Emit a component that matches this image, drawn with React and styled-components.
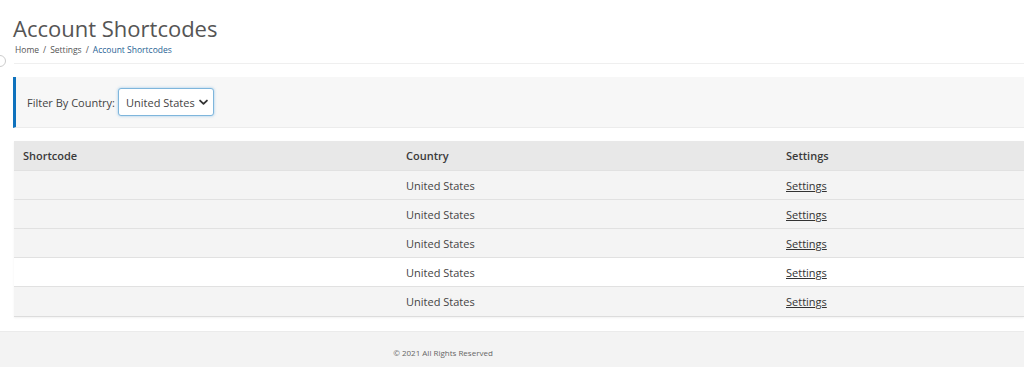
import React from 'react'
import styled, { createGlobalStyle } from 'styled-components'

const GlobalStyle = createGlobalStyle`
  html, body {
    margin: 0;
    padding: 0;
    background: #fff;
    font-family: 'Open Sans', 'Liberation Sans', sans-serif;
    color: #444;
    overflow: hidden;
  }
`

const Page = styled.div`
  width: 1024px;
  height: 367px;
  display: flex;
  flex-direction: column;
  position: relative;
  overflow: hidden;
`

const Header = styled.header`
  padding: 13px 0 0 13px;
`

const Title = styled.h1`
  margin: 0;
  font-size: 22px;
  font-weight: 400;
  line-height: 30px;
  color: #555;
`

const Crumbs = styled.div`
  display: flex;
  gap: 4px;
  margin: 1px 0 0 2px;
  font-size: 8.5px;
  line-height: 12px;
  color: #555;
`

const Crumb = styled.span`
  color: ${p => (p.active ? '#1f5f94' : '#555')};
`

const Divider = styled.div`
  margin: 7px 0 0 14px;
  height: 1px;
  background: #efefef;
`

const EdgeDot = styled.div`
  position: absolute;
  left: -6px;
  top: 55px;
  width: 10px;
  height: 10px;
  border: 1px solid #ccc;
  border-radius: 50%;
  background: #fff;
`

const FilterBar = styled.section`
  margin: 13px 0 0 13px;
  height: 50px;
  display: flex;
  align-items: center;
  gap: 3px;
  padding-left: 11px;
  background: #f7f7f7;
  border-left: 3px solid #0f72bd;
  border-bottom: 1px solid #ececec;
  font-size: 11px;
  color: #444;
`

const SelectBox = styled.div`
  width: 96px;
  height: 28px;
  box-sizing: border-box;
  display: flex;
  align-items: center;
  justify-content: space-between;
  padding: 0 5px 0 7px;
  background: #fff;
  border: 1px solid #7fb6dc;
  border-radius: 3px;
  box-shadow: 0 0 3px rgba(80, 160, 220, 0.55);
  font-size: 11px;
  color: #444;
`

const Table = styled.div`
  margin: 13px 0 0 14px;
  border-bottom: 1px solid #dcdcdc;
  box-shadow: 0 1px 2px rgba(0, 0, 0, 0.06);
`

const Row = styled.div`
  box-sizing: border-box;
  display: grid;
  grid-template-columns: 383px 380px 1fr;
  height: ${p => (p.head ? 30 : 29)}px;
  align-items: center;
  background: ${p => (p.head ? '#e8e8e8' : p.hover ? '#fff' : '#f4f4f4')};
  border-bottom: 1px solid ${p => (p.last ? 'transparent' : '#e1e1e1')};
  font-size: 11px;
  font-weight: ${p => (p.head ? 600 : 400)};
  color: ${p => (p.head ? '#3a3a3a' : '#444')};
`

const Cell = styled.div`
  padding-left: 9px;
  white-space: nowrap;
`

const Link = styled.a`
  color: #333;
  text-decoration: underline;
  cursor: pointer;
`

const Footer = styled.footer`
  box-sizing: border-box;
  margin-top: auto;
  height: 36px;
  background: #f3f3f3;
  border-top: 1px solid #ebebeb;
  display: flex;
  align-items: center;
  justify-content: center;
  padding: 5px 138px 0 0;
  font-size: 8px;
  color: #666;
`

const Chevron = () => (
  <svg width="9" height="7" viewBox="0 0 10 7">
    <path d="M1.2 1.3 L5 5 L8.8 1.3" fill="none" stroke="#333" strokeWidth="2" strokeLinecap="round" strokeLinejoin="round" />
  </svg>
)

const rows = [false, false, false, true, false]

export default function App() {
  return (
    <Page>
      <GlobalStyle />
      <EdgeDot />
      <Header>
        <Title>Account Shortcodes</Title>
        <Crumbs>
          <Crumb>Home</Crumb>
          <Crumb>/</Crumb>
          <Crumb>Settings</Crumb>
          <Crumb>/</Crumb>
          <Crumb active>Account Shortcodes</Crumb>
        </Crumbs>
      </Header>
      <Divider />
      <FilterBar>
        <span>Filter By Country:</span>
        <SelectBox>
          <span>United States</span>
          <Chevron />
        </SelectBox>
      </FilterBar>
      <Table>
        <Row head>
          <Cell>Shortcode</Cell>
          <Cell>Country</Cell>
          <Cell>Settings</Cell>
        </Row>
        {rows.map((hover, i) => (
          <Row key={i} hover={hover} last={i === rows.length - 1}>
            <Cell />
            <Cell>United States</Cell>
            <Cell>
              <Link>Settings</Link>
            </Cell>
          </Row>
        ))}
      </Table>
      <Footer>© 2021 All Rights Reserved</Footer>
    </Page>
  )
}
